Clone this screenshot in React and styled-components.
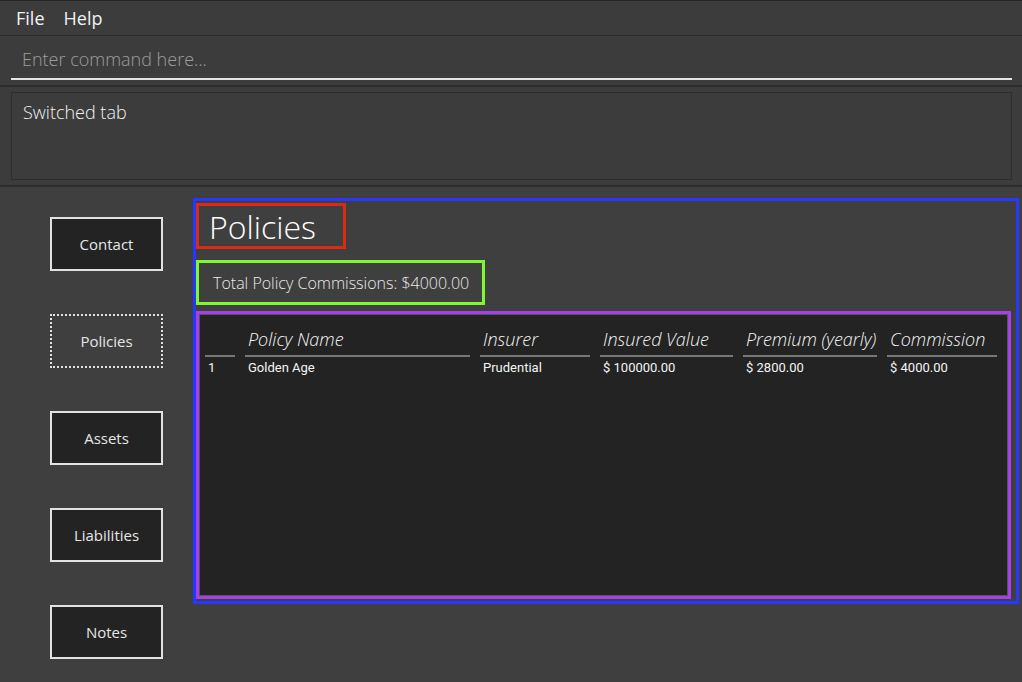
import React from "react";
import styled, { createGlobalStyle } from "styled-components";

const Global = createGlobalStyle`
  html, body {
    margin: 0;
    padding: 0;
    background: #3f3f3f;
    font-family: "Open Sans", "Noto Sans", sans-serif;
    color: #fff;
  }
  #root {
    min-height: 682px;
  }
`;

const Page = styled.div`
  width: 1022px;
  height: 682px;
  overflow: hidden;
  display: flex;
  flex-direction: column;
  background: #3f3f3f;
  border-top: 1px solid #262626;
  box-sizing: border-box;
`;

const MenuBar = styled.div`
  height: 34px;
  display: flex;
  align-items: center;
  gap: 19px;
  padding-left: 16px;
  background: #3c3c3c;
  border-bottom: 1px solid #2e2e2e;
  font-size: 18px;
  color: #f2f2f2;
`;

const MenuItem = styled.span`
  line-height: 1;
  margin-top: -1px;
`;

const CommandArea = styled.div`
  height: 51px;
  padding: 0 10px 0 11px;
  display: flex;
  align-items: flex-end;
  background: #3c3c3c;
  border-bottom: 2px solid #2e2e2e;
  box-sizing: border-box;
`;

const CommandInput = styled.div`
  flex: 1;
  height: 38px;
  margin-bottom: 5px;
  padding-left: 11px;
  display: flex;
  align-items: center;
  border-bottom: 2px solid #e3e3e3;
  color: #9c9c9c;
  font-size: 18px;
  font-weight: 300;
`;

const ResultArea = styled.div`
  height: 100px;
  padding: 5px 10px 5px 11px;
  background: #3c3c3c;
  border-bottom: 2px solid #2e2e2e;
  box-sizing: border-box;
`;

const ResultBox = styled.div`
  height: 100%;
  box-sizing: border-box;
  border: 1px solid #2e2e2e;
  padding: 7px 0 0 11px;
  font-size: 18px;
  font-weight: 300;
  color: #f2f2f2;
`;

const Main = styled.div`
  flex: 1;
  display: flex;
  background: #3f3f3f;
`;

const Sidebar = styled.div`
  width: 193px;
  padding: 30px 0 0 50px;
  box-sizing: border-box;
  display: flex;
  flex-direction: column;
  gap: 43px;
`;

const TabButton = styled.div`
  width: 113px;
  height: 54px;
  box-sizing: border-box;
  display: flex;
  align-items: center;
  justify-content: center;
  background: ${(p) => (p.$active ? "#3f3f3f" : "#232323")};
  border: 2px ${(p) => (p.$active ? "dotted" : "solid")} #e2e2e2;
  font-size: 15px;
  color: #e6e6e6;
`;

const Panel = styled.div`
  margin-top: 11px;
  width: 826px;
  height: 406px;
  box-sizing: border-box;
  border: 3px solid #2638ff;
  padding: 2px 5px 2px 0;
  display: flex;
  flex-direction: column;
`;

const Title = styled.div`
  width: 150px;
  height: 46px;
  box-sizing: border-box;
  border: 3px solid #d92c17;
  padding-left: 10px;
  display: flex;
  align-items: center;
  font-size: 32px;
  font-weight: 300;
  color: #fff;
`;

const Summary = styled.div`
  margin-top: 11px;
  width: 289px;
  height: 45px;
  box-sizing: border-box;
  border: 3px solid #7dfa2c;
  padding-left: 14px;
  display: flex;
  align-items: center;
  font-size: 16px;
  font-weight: 300;
  color: #eaeaea;
`;

const TableFrame = styled.div`
  margin-top: 6px;
  flex: 1;
  box-sizing: border-box;
  border: 3px solid #a63fec;
`;

const Table = styled.div`
  height: 100%;
  box-sizing: border-box;
  border: 1px solid #555;
  background: #232323;
  padding: 10px 0 0 5px;
  display: grid;
  grid-template-columns: 30px 225px 110px 133px 134px 110px;
  grid-auto-rows: min-content;
  column-gap: 10px;
`;

const HeadCell = styled.div`
  height: 30px;
  padding-left: 3px;
  border-bottom: 2px solid #777;
  font-size: 18px;
  font-style: italic;
  font-weight: 300;
  color: #f4f4f4;
  white-space: nowrap;
  line-height: 28px;
`;

const Cell = styled.div`
  padding: 3px 0 0 3px;
  font-family: Roboto, "Liberation Sans", sans-serif;
  font-size: 13px;
  color: #f4f4f4;
  white-space: nowrap;
`;

const tabs = ["Contact", "Policies", "Assets", "Liabilities", "Notes"];
const columns = ["", "Policy Name", "Insurer", "Insured Value", "Premium (yearly)", "Commission"];
const rows = [["1", "Golden Age", "Prudential", "$ 100000.00", "$ 2800.00", "$ 4000.00"]];

export default function App() {
  return (
    <>
      <Global />
      <Page>
        <MenuBar>
          <MenuItem>File</MenuItem>
          <MenuItem>Help</MenuItem>
        </MenuBar>
        <CommandArea>
          <CommandInput>Enter command here...</CommandInput>
        </CommandArea>
        <ResultArea>
          <ResultBox>Switched tab</ResultBox>
        </ResultArea>
        <Main>
          <Sidebar>
            {tabs.map((t) => (
              <TabButton key={t} $active={t === "Policies"}>
                {t}
              </TabButton>
            ))}
          </Sidebar>
          <Panel>
            <Title>Policies</Title>
            <Summary>Total Policy Commissions: $4000.00</Summary>
            <TableFrame>
              <Table>
                {columns.map((c, i) => (
                  <HeadCell key={i}>{c}</HeadCell>
                ))}
                {rows.map((r) => r.map((v, i) => <Cell key={i}>{v}</Cell>))}
              </Table>
            </TableFrame>
          </Panel>
        </Main>
      </Page>
    </>
  );
}
